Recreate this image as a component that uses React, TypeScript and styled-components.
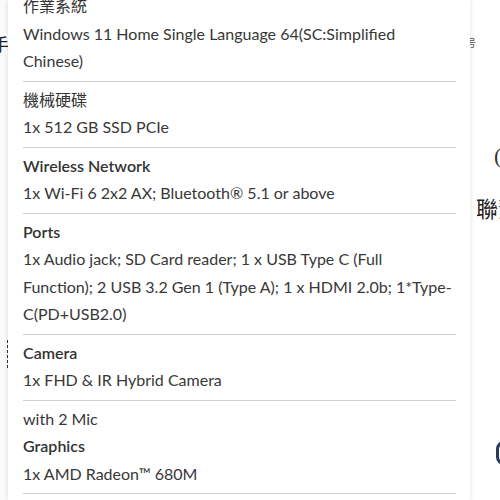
import React from "react";
import styled, { createGlobalStyle } from "styled-components";

const Global = createGlobalStyle`
  html, body { margin: 0; padding: 0; background: #ffffff; }
  body { font-family: Lato, "Noto Sans CJK TC", sans-serif; }
`;

const Screen = styled.div`
  display: flex;
  width: 500px;
  height: 500px;
  overflow: hidden;
  background: #ffffff;
`;

/* Background page fragments visible on either side of the sheet */
const LeftPeek = styled.div`
  width: 8px;
  flex: none;
  overflow: hidden;
  display: flex;
  flex-direction: column;
  align-items: flex-end;
  padding-top: 36px;
  background: #fbfbfb;
  font-family: "Liberation Serif", "Noto Sans CJK TC", serif;
  color: #222;
`;

const LeftChar = styled.span`
  font-size: 17px;
  line-height: 20px;
  margin-right: -1px;
  white-space: nowrap;
`;

const LeftMarks = styled.span`
  margin-top: 284px;
  margin-right: -1px;
  width: 2px;
  height: 30px;
  background: repeating-linear-gradient(to bottom, #3a3320 0 3px, transparent 3px 5px);
`;

const RightPeek = styled.div`
  flex: 1;
  overflow: hidden;
  display: flex;
  flex-direction: column;
  padding-top: 38px;
  background: #ffffff;
  font-family: "Liberation Serif", "Noto Sans CJK TC", serif;
  color: #222;
`;

const TinyChar = styled.span`
  font-size: 10px;
  line-height: 12px;
  color: #555;
  margin-left: -4px;
`;

const Paren = styled.span`
  margin-top: 94px;
  margin-left: 24px;
  font-size: 22px;
  line-height: 24px;
  color: #333;
`;

const Contact = styled.span`
  margin-top: 30px;
  margin-left: 6px;
  font-size: 22px;
  line-height: 24px;
  white-space: nowrap;
`;

const RoundIcon = styled.span`
  margin-top: 219px;
  margin-left: 26px;
  width: 16px;
  height: 24px;
  flex: none;
  box-sizing: border-box;
  border-radius: 8px;
  border: 3px solid #2b3a5a;
`;

const Panel = styled.div`
  position: relative;
  z-index: 1;
  width: 462px;
  flex: none;
  box-sizing: border-box;
  padding: 0 14px 0 15px;
  background: #ffffff;
  box-shadow: 0 0 5px rgba(0, 0, 0, 0.14);
`;

const List = styled.div`
  margin-top: -12px;
  display: flex;
  flex-direction: column;
`;

const Section = styled.div`
  padding: 4px 0 6px;
  border-bottom: 1px solid #cfcfcf;
`;

const Label = styled.div<{ $cjk?: boolean }>`
  font-size: 16px;
  line-height: 27.5px;
  font-weight: ${(p) => (p.$cjk ? 400 : 600)};
  color: #333;
`;

const Value = styled.div`
  font-size: 16px;
  line-height: 27.5px;
  font-weight: 400;
  color: #383838;
`;

const specs: { label: string; value?: string; cjk?: boolean; pre?: string }[] = [
  { label: "作業系統", cjk: true, value: "Windows 11 Home Single Language 64(SC:Simplified Chinese)" },
  { label: "機械硬碟", cjk: true, value: "1x 512 GB SSD PCIe" },
  { label: "Wireless Network", value: "1x Wi-Fi 6 2x2 AX; Bluetooth® 5.1 or above" },
  {
    label: "Ports",
    value:
      "1x Audio jack; SD Card reader; 1 x USB Type C (Full Function); 2 USB 3.2 Gen 1 (Type A); 1 x HDMI 2.0b; 1*Type-C(PD+USB2.0)",
  },
  { label: "Camera", value: "1x FHD & IR Hybrid Camera" },
  { label: "Graphics", pre: "with 2 Mic", value: "1x AMD Radeon™ 680M" },
];

export default function App() {
  return (
    <>
      <Global />
      <Screen>
        <LeftPeek>
          <LeftChar>手</LeftChar>
          <LeftMarks />
        </LeftPeek>
        <Panel>
          <List>
            {specs.map((s) => (
              <Section key={s.label}>
                {s.pre && <Value>{s.pre}</Value>}
                <Label $cjk={s.cjk}>{s.label}</Label>
                {s.value && <Value>{s.value}</Value>}
              </Section>
            ))}
          </List>
        </Panel>
        <RightPeek>
          <TinyChar>号</TinyChar>
          <Paren>(</Paren>
          <Contact>聯繫</Contact>
          <RoundIcon />
        </RightPeek>
      </Screen>
    </>
  );
}
